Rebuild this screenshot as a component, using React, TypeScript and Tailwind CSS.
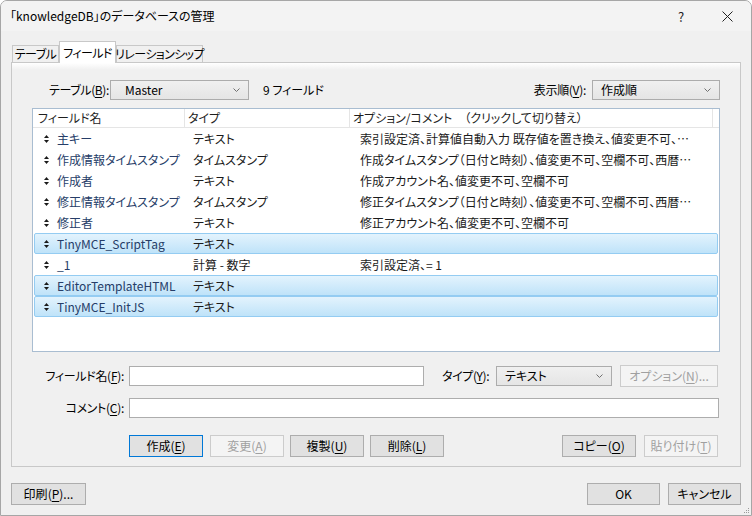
import React from "react";

type Field = {
  name: string;
  type: string;
  option: string;
  selected?: boolean;
};

const fields: Field[] = [
  { name: "主キー", type: "テキスト", option: "索引設定済、計算値自動入力 既存値を置き換え、値変更不可、…" },
  { name: "作成情報タイムスタンプ", type: "タイムスタンプ", option: "作成タイムスタンプ（日付と時刻）、値変更不可、空欄不可、西暦…" },
  { name: "作成者", type: "テキスト", option: "作成アカウント名、値変更不可、空欄不可" },
  { name: "修正情報タイムスタンプ", type: "タイムスタンプ", option: "修正タイムスタンプ（日付と時刻）、値変更不可、空欄不可、西暦…" },
  { name: "修正者", type: "テキスト", option: "修正アカウント名、値変更不可、空欄不可" },
  { name: "TinyMCE_ScriptTag", type: "テキスト", option: "", selected: true },
  { name: "_1", type: "計算 - 数字", option: "索引設定済、= 1" },
  { name: "EditorTemplateHTML", type: "テキスト", option: "", selected: true },
  { name: "TinyMCE_InitJS", type: "テキスト", option: "", selected: true },
];

export default function App() {
  return (
    <div className="w-[752px] h-[516px] overflow-hidden bg-[#f0f0f0] border border-[#a6a6a6] rounded-t-[7px] text-[12px] leading-none text-[#000] font-['Noto_Sans_CJK_JP','Noto_Sans',sans-serif] [font-feature-settings:'palt'] whitespace-nowrap flex flex-col">
      {/* title bar */}
      <div className="h-[30px] shrink-0 flex items-center pl-[9px] bg-[#f3f3f3]">
        <span className="text-[12px]">「knowledgeDB」のデータベースの管理</span>
        <span className="ml-auto w-[10px] text-center text-[13px] text-[#222]">?</span>
        <span className="ml-[36px] mr-[18px] flex items-center">
          <svg width="11" height="11" viewBox="0 0 11 11">
            <path d="M0.5 0.5 L10.5 10.5 M10.5 0.5 L0.5 10.5" stroke="#222" strokeWidth="1" />
          </svg>
        </span>
      </div>

      {/* tabs */}
      <div className="h-[31px] shrink-0 flex items-end pl-[11px] tracking-[-0.6px]">
        <Tab label="テーブル" width="w-[47px]" />
        <div className="relative z-10 -mb-[1px] h-[22px] w-[57px] bg-white border border-b-0 border-[#c8c8c8] flex items-center justify-center">
          フィールド
        </div>
        <Tab label="リレーションシップ" width="w-[87px]" />
      </div>

      {/* tab page */}
      <div className="ml-[10px] w-[730px] h-[405px] shrink-0 border border-[#c8c8c8] bg-[#f0f0f0] bg-gradient-to-b from-white from-[0px] to-[#f0f0f0] to-[7px] flex flex-col">
        <div className="mt-[17px] h-[20px] flex items-center pl-[37px] pr-[20px]">
          <span className="w-[61px] tracking-[-0.4px]">
            テーブル(<u className="underline-offset-2">B</u>):
          </span>
          <Select value="Master" width="w-[139px]" textPad="pl-[14px]" />
          <span className="ml-[14px]">9 フィールド</span>
          <span className="ml-auto tracking-[-0.3px]">
            表示順(<u className="underline-offset-2">V</u>):
          </span>
          <Select value="作成順" width="w-[128px]" className="ml-[6px]" textPad="pl-[8px]" />
        </div>

        {/* field list */}
        <div className="mt-[8px] mx-[20px] h-[244px] border border-[#a9bdd1] bg-white flex flex-col">
          <div className="h-[19px] shrink-0 flex border-b border-[#e5e5e5] text-[#1e1e1e]">
            <div className="w-[152px] pl-[5px] flex items-center border-r border-[#e5e5e5]">フィールド名</div>
            <div className="w-[165px] pl-[3px] flex items-center border-r border-[#e5e5e5]">タイプ</div>
            <div className="w-[363px] pl-[3px] flex items-center border-r border-[#e5e5e5] whitespace-pre">
              オプション/コメント　（クリックして切り替え）
            </div>
            <div className="flex-1" />
          </div>
          {fields.map((f) => (
            <FieldRow key={f.name} field={f} />
          ))}
        </div>

        {/* name / type row */}
        <div className="mt-[14px] h-[20px] flex items-center">
          <span className="w-[112px] text-right tracking-[-0.3px]">
            フィールド名(<u className="underline-offset-2">F</u>):
          </span>
          <div className="ml-[5px] w-[295px] h-[20px] bg-white border border-[#adadad]" />
          <span className="ml-[18px] w-[51px] tracking-[-0.4px]">
            タイプ(<u className="underline-offset-2">Y</u>):
          </span>
          <Select value="テキスト" width="w-[116px]" className="ml-[3px]" textPad="pl-[8px]" />
          <Button label="オプション" accel="N" suffix="..." width="w-[98px]" className="ml-[8px]" disabled />
        </div>

        {/* comment row */}
        <div className="mt-[12px] h-[20px] flex items-center">
          <span className="w-[112px] text-right tracking-[-0.3px]">
            コメント(<u className="underline-offset-2">C</u>):
          </span>
          <div className="ml-[5px] w-[590px] h-[20px] bg-white border border-[#adadad]" />
        </div>

        {/* action buttons */}
        <div className="mt-[17px] flex items-center pl-[117px]">
          <Button label="作成" accel="E" width="w-[74px]" focused />
          <Button label="変更" accel="A" width="w-[74px]" className="ml-[7px]" disabled />
          <Button label="複製" accel="U" width="w-[74px]" className="ml-[6px]" />
          <Button label="削除" accel="L" width="w-[74px]" className="ml-[6px]" />
          <Button label="コピー" accel="O" width="w-[74px]" className="ml-[118px]" />
          <Button label="貼り付け" accel="T" width="w-[74px]" className="ml-[8px]" disabled />
        </div>
      </div>

      {/* footer */}
      <div className="mt-[16px] flex items-center px-[10px]">
        <Button label="印刷" accel="P" suffix="..." width="w-[75px]" />
        <Button label="OK" width="w-[73px]" className="ml-auto" />
        <Button label="キャンセル" width="w-[73px]" className="ml-[8px]" />
      </div>
      <div className="flex-1 flex justify-end items-end pr-[1px] pb-[1px]">
        <svg width="6" height="6" viewBox="0 0 6 6">
          <rect x="4" y="0" width="1" height="1" fill="#9a9a9a" />
          <rect x="2" y="2" width="1" height="1" fill="#9a9a9a" />
          <rect x="4" y="2" width="1" height="1" fill="#9a9a9a" />
          <rect x="0" y="4" width="1" height="1" fill="#9a9a9a" />
          <rect x="2" y="4" width="1" height="1" fill="#9a9a9a" />
          <rect x="4" y="4" width="1" height="1" fill="#9a9a9a" />
        </svg>
      </div>
    </div>
  );
}

function Tab({ label, width }: { label: string; width: string }) {
  return (
    <div
      className={`${width} h-[17px] bg-[#f0f0f0] border border-b-0 border-[#c8c8c8] flex items-center justify-center`}
    >
      {label}
    </div>
  );
}

function Chevron() {
  return (
    <svg width="7" height="4" viewBox="0 0 7 4">
      <polyline points="0.5,0.5 3.5,3.5 6.5,0.5" fill="none" stroke="#707070" strokeWidth="1" />
    </svg>
  );
}

function Select({
  value,
  width,
  className = "",
  textPad,
}: {
  value: string;
  width: string;
  className?: string;
  textPad: string;
}) {
  return (
    <div
      className={`${width} ${className} h-[20px] shrink-0 border border-[#acacac] bg-gradient-to-b from-[#f0f0f0] to-[#e5e5e5] flex items-center ${textPad} pr-[8px]`}
    >
      <span>{value}</span>
      <span className="ml-auto flex items-center">
        <Chevron />
      </span>
    </div>
  );
}

function Button({
  label,
  accel,
  suffix = "",
  width,
  className = "",
  disabled,
  focused,
}: {
  label: string;
  accel?: string;
  suffix?: string;
  width: string;
  className?: string;
  disabled?: boolean;
  focused?: boolean;
}) {
  const tone = disabled
    ? "bg-[#f4f4f4] border-[#cccccc] text-[#a0a0a0]"
    : focused
    ? "bg-[#e1e1e1] border-[#0078d7] text-[#000]"
    : "bg-[#e1e1e1] border-[#adadad] text-[#000]";

  return (
    <div className={`${width} ${className} h-[22px] shrink-0 border ${tone} flex items-center justify-center`}>
      {label}
      {accel && (
        <>
          (<u className="underline-offset-2">{accel}</u>)
        </>
      )}
      {suffix}
    </div>
  );
}

function SortHandle() {
  return (
    <svg width="5" height="8" viewBox="0 0 5 8">
      <polygon points="2.5,0 5,3 0,3" fill="#1a1a1a" />
      <polygon points="0,5 5,5 2.5,8" fill="#1a1a1a" />
    </svg>
  );
}

function FieldRow({ field }: { field: Field }) {
  const box = field.selected
    ? "border border-[#94ccf2] rounded-[2px] bg-gradient-to-b from-[#e3f3fd] to-[#bfe3f9]"
    : "border border-transparent";

  return (
    <div className={`h-[21px] shrink-0 mx-[1px] flex items-center ${box}`}>
      <div className="w-[158px] flex items-center pl-[9px] gap-[8px]">
        <SortHandle />
        <span className="text-[#263d68]">{field.name}</span>
      </div>
      <div className="w-[167px] text-[#1a1a1a]">{field.type}</div>
      <div className="flex-1 text-[#1a1a1a]">{field.option}</div>
    </div>
  );
}
